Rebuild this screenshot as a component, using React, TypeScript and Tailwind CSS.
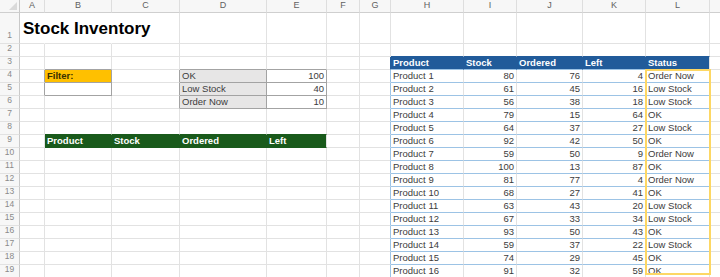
import React from 'react';

const COLS = ['', 'A', 'B', 'C', 'D', 'E', 'F', 'G', 'H', 'I', 'J', 'K', 'L', ''];
const WIDTHS = [
  'w-[20px]', 'w-[25px]', 'w-[67px]', 'w-[68px]', 'w-[87px]', 'w-[60px]', 'w-[33px]',
  'w-[31px]', 'w-[73px]', 'w-[53px]', 'w-[66px]', 'w-[63px]', 'w-[64px]', 'w-[64px]',
];
const ROWS = 19;

const products: [number, number][] = [
  [80, 76], [61, 45], [56, 38], [79, 15], [64, 37], [92, 42], [59, 50], [100, 13],
  [81, 77], [68, 27], [63, 43], [67, 33], [93, 50], [59, 37], [74, 29], [91, 32],
];

const status = (left: number) => (left <= 10 ? 'Order Now' : left <= 40 ? 'Low Stock' : 'OK');

type Cell = { text?: string | number; right?: boolean; bold?: boolean; bg?: string; color?: string };

const buildCells = () => {
  const cells: Record<string, Cell> = {};
  const put = (r: number, c: number, cell: Cell) => (cells[`${r},${c}`] = cell);

  put(4, 2, { text: 'Filter:', bold: true, bg: 'bg-[#ffc000]', color: 'text-[#3a3000]' });
  put(5, 2, { bg: 'bg-white' });

  [['OK', 100], ['Low Stock', 40], ['Order Now', 10]].forEach(([label, n], i) => {
    put(4 + i, 4, { text: label, bg: 'bg-[#e7e6e6]' });
    put(4 + i, 5, { text: n, right: true, bg: 'bg-white' });
  });

  ['Product', 'Stock', 'Ordered', 'Left'].forEach((h, i) =>
    put(9, 2 + i, { text: h, bold: true, bg: 'bg-[#195a1b]', color: 'text-white' })
  );

  ['Product', 'Stock', 'Ordered', 'Left', 'Status'].forEach((h, i) =>
    put(3, 8 + i, { text: h, bold: true, bg: 'bg-[#215b9a]', color: 'text-white' })
  );

  products.forEach(([stock, ordered], i) => {
    const r = 4 + i;
    if (r > ROWS) return;
    const left = stock - ordered;
    put(r, 8, { text: `Product ${i + 1}` });
    put(r, 9, { text: stock, right: true });
    put(r, 10, { text: ordered, right: true });
    put(r, 11, { text: left, right: true });
    put(r, 12, { text: status(left) });
  });

  return cells;
};

const inside = (r: number, c: number, r1: number, c1: number, r2: number, c2: number) =>
  r >= r1 && r <= r2 && c >= c1 && c <= c2;

const rightBorder = (r: number, c: number) => {
  if (r === 1 && (c === 1 || c === 2)) return 'border-r-transparent';
  if (inside(r, c, 4, 3, 6, 5) || inside(r, c, 4, 1, 5, 2)) return 'border-r-[#a3a3a3]';
  if (inside(r, c, 9, 2, 9, 4)) return 'border-r-[#195a1b]';
  if (inside(r, c, 3, 7, 3, 11)) return 'border-r-[#215b9a]';
  if (c === 7 && r >= 4) return 'border-r-[#9cc3e5]';
  return 'border-r-[#e2e2e2]';
};

const bottomBorder = (r: number, c: number) => {
  if (inside(r, c, 3, 4, 6, 5) || inside(r, c, 3, 2, 5, 2)) return 'border-b-[#a3a3a3]';
  if (inside(r, c, 8, 2, 9, 5)) return 'border-b-[#195a1b]';
  if (inside(r, c, 2, 8, 2, 12)) return 'border-b-[#215b9a]';
  if (inside(r, c, 3, 8, ROWS, 12)) return 'border-b-[#9cc3e5]';
  return 'border-b-[#e2e2e2]';
};

const Corner = () => (
  <div className="w-[20px] h-[13px] shrink-0 bg-[#f7f7f7] border-r border-b border-r-[#c9c9c9] border-b-[#cfcfcf] flex items-end justify-end p-[2px]">
    <svg width="8" height="8" viewBox="0 0 8 8">
      <path d="M8 0 L8 8 L0 8 Z" fill="#dadada" />
    </svg>
  </div>
);

export default function App() {
  const cells = buildCells();

  return (
    <div className="relative w-[720px] h-[277px] overflow-hidden bg-white font-['Liberation_Sans',Arial,sans-serif] text-[#3c3c3c]">
      <div className="flex h-[13px]">
        <Corner />
        {COLS.slice(1).map((l, c) => (
          <div
            key={c}
            className={`${WIDTHS[c + 1]} shrink-0 h-[13px] bg-[#f7f7f7] border-r border-b border-r-[#dedede] border-b-[#cfcfcf] flex items-center justify-center text-[9px] text-[#616161]`}
          >
            {l}
          </div>
        ))}
      </div>

      {Array.from({ length: ROWS }, (_, i) => i + 1).map((r) => (
        <div key={r} className={`flex ${r === 1 ? 'h-[31px]' : 'h-[13px]'}`}>
          <div className="w-[20px] shrink-0 bg-[#f7f7f7] border-r border-b border-r-[#c9c9c9] border-b-[#e2e2e2] flex items-end justify-center pb-px text-[8.5px] text-[#8a8a8a]">
            {r}
          </div>
          {COLS.slice(1).map((_, i) => {
            const c = i + 1;
            const cell = cells[`${r},${c}`];
            const isTitle = r === 1 && c === 1;
            return (
              <div
                key={c}
                className={`${WIDTHS[c]} shrink-0 border-r border-b ${rightBorder(r, c)} ${bottomBorder(r, c)} ${cell?.bg ?? ''} flex items-center ${cell?.right ? 'justify-end' : 'justify-start'} px-[2px] whitespace-nowrap overflow-visible`}
              >
                {isTitle ? (
                  <span className="self-end pb-[6px] pl-px text-[17px] font-bold text-black leading-none">Stock Inventory</span>
                ) : cell?.text !== undefined ? (
                  <span className={`text-[9.5px] leading-none ${cell.bold ? 'font-bold' : ''} ${cell.color ?? ''}`}>{cell.text}</span>
                ) : null}
              </div>
            );
          })}
        </div>
      ))}

      <div className="absolute left-[645px] top-[69px] w-[66px] h-[206px] border-2 border-[#fdd764] pointer-events-none" />
    </div>
  );
}
